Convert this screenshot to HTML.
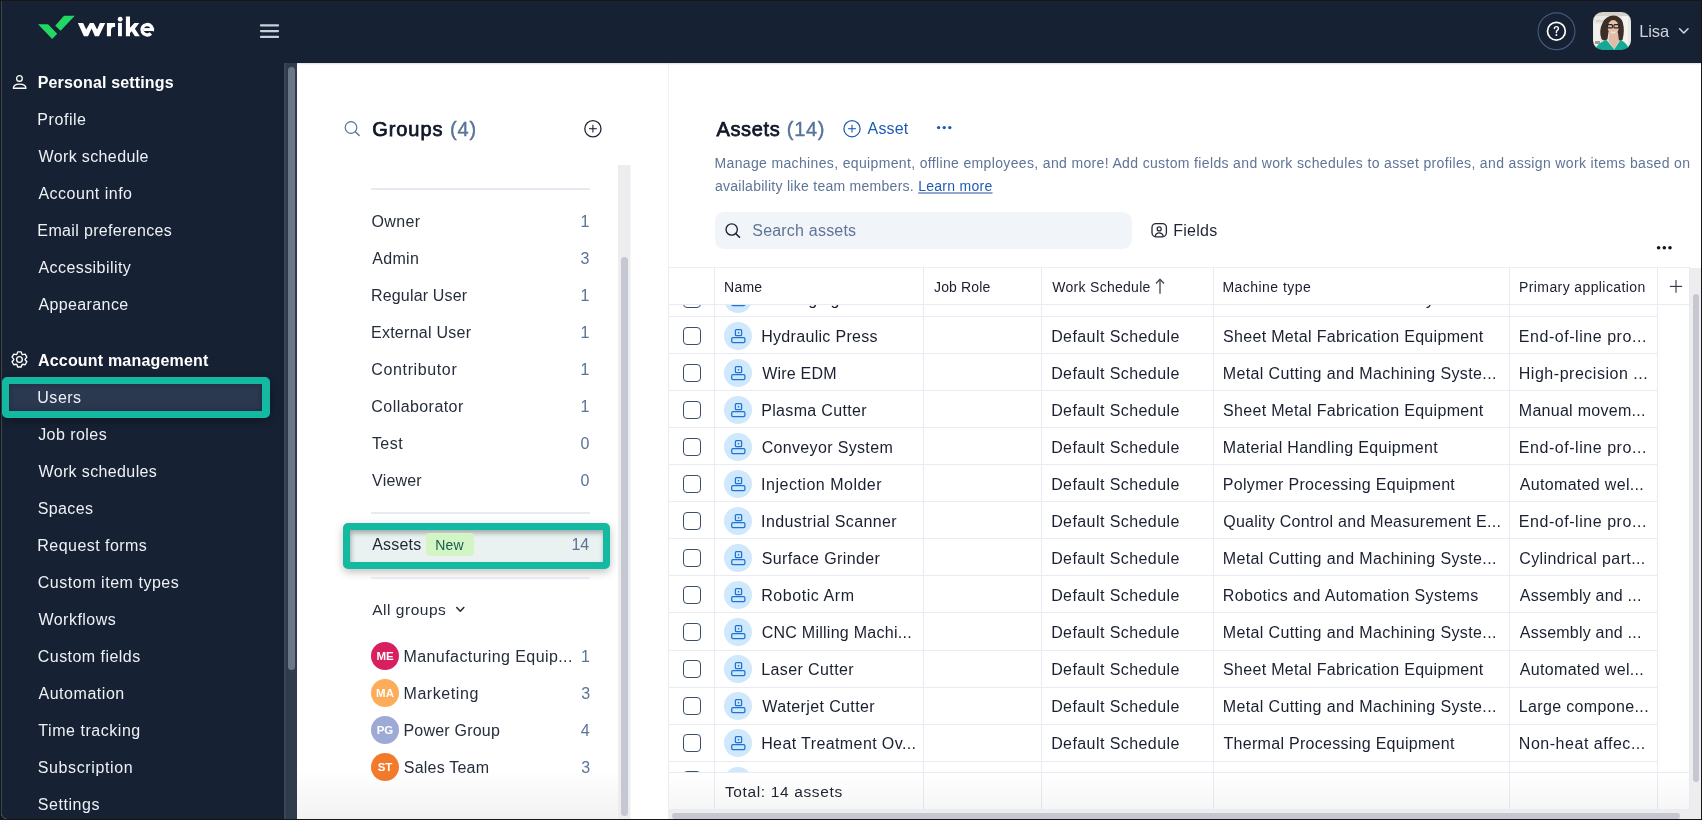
<!DOCTYPE html><html><head><meta charset="utf-8"><style>
html,body{margin:0;padding:0;width:1702px;height:820px;overflow:hidden;background:#161616}
body{position:relative;font-family:"Liberation Sans", sans-serif}
</style></head><body>
<div style="position:absolute;left:0;top:0;width:1702px;height:820px;will-change:transform">
<div style="position:absolute;left:0.00px;top:0.00px;width:1702.00px;height:820.00px;background:#161616"></div>
<div style="position:absolute;left:1.00px;top:1.00px;width:1700.00px;height:818.00px;background:#ffffff;border-radius:0 0 6px 6px"></div>
<div style="position:absolute;left:1.00px;top:1.00px;width:1700.00px;height:62.00px;background:#162133;box-shadow:inset 1px 0 0 #3a4557"></div>
<div style="position:absolute;left:1.00px;top:63.00px;width:283.00px;height:756.00px;background:#162133;border-bottom-left-radius:6px;box-shadow:inset 1px 0 0 #3a4557"></div>
<div style="position:absolute;left:284.00px;top:63.00px;width:13.00px;height:756.00px;background:#303c4d"></div>
<div style="position:absolute;left:284.00px;top:63.00px;width:2.00px;height:756.00px;background:#3a4556"></div>
<div style="position:absolute;left:288.00px;top:67.00px;width:7.00px;height:603.00px;background:#6b7686;border-radius:3.5px"></div>
<svg style="position:absolute;left:30px;top:8px;" width="130" height="40" viewBox="0 0 130 40"><polygon points="8,16.3 18,16.3 27.2,25.7 22.2,31" fill="#23d862"/><polygon points="25.2,17.7 34,7.8 44.8,7.8 30.6,22.8" fill="#23d862"/></svg>
<svg style="position:absolute;left:70px;top:10px;" width="90" height="30" viewBox="0 0 90 30"><g transform="translate(-70,-10)" fill="#ffffff"><polygon points="77.9,23 83.1,23 86.2,29.6 89.9,23 93.7,23 97.1,29.6 99.9,23 105.3,23 98.9,36.2 94.9,36.2 91.6,28.4 88,36.2 83.9,36.2"/><path d="M106.9 36.2 V22.9 H115.1 V27.1 H114 Q111 27.1 111 30.5 V36.2 Z"/><rect x="118" y="22.9" width="3.9" height="13.3"/><circle cx="120.2" cy="19.2" r="2.45"/><polygon points="125.9,16.6 130,16.6 130,27.8 134.4,22.9 139.3,22.9 134.9,28.8 139.8,36.2 134.9,36.2 131.6,31.3 130,33 130,36.2 125.9,36.2"/><path d="M152.29 31.02 A5.25 5.25 0 1 0 150.91 33.46" fill="none" stroke="#ffffff" stroke-width="3.3"/><rect x="143.5" y="28.1" width="10.6" height="2.9"/></g></svg>
<svg style="position:absolute;left:258px;top:22px;" width="24" height="18" viewBox="0 0 24 18"><g stroke="#c8d0dc" stroke-width="2.3" stroke-linecap="round"><line x1="3" y1="3.4" x2="20" y2="3.4"/><line x1="3" y1="9.1" x2="20" y2="9.1"/><line x1="3" y1="14.9" x2="20" y2="14.9"/></g></svg>
<svg style="position:absolute;left:1536px;top:11px;" width="41" height="41" viewBox="0 0 41 41"><circle cx="20.5" cy="20.2" r="18.4" fill="none" stroke="#44587a" stroke-width="1.2"/><circle cx="20.4" cy="20.2" r="8.9" fill="none" stroke="#ffffff" stroke-width="1.7"/><path d="M18.4 17.6 Q18.4 15.6 20.4 15.6 Q22.4 15.6 22.4 17.4 Q22.4 18.7 21.2 19.4 Q20.4 19.9 20.4 21.1 V21.6" fill="none" stroke="#ffffff" stroke-width="1.45" stroke-linecap="round"/><circle cx="20.4" cy="24" r="0.95" fill="#ffffff"/></svg>
<svg style="position:absolute;left:1593px;top:12px;" width="38" height="38" viewBox="0 0 38 38"><defs><clipPath id="av"><rect x="0" y="0" width="38" height="38" rx="9.5"/></clipPath><filter id="avb" x="-10%" y="-10%" width="120%" height="120%"><feGaussianBlur stdDeviation="0.55"/></filter></defs>
<g clip-path="url(#av)"><g filter="url(#avb)"><rect width="38" height="38" fill="#e8e7e3"/><rect x="0" y="0" width="38" height="4" fill="#d6d2ca"/><rect x="3" y="8" width="30" height="2.2" fill="#d9d1c4"/><rect x="29" y="4" width="6" height="30" fill="#f3f2ef"/><rect x="1" y="12" width="6" height="22" fill="#f0efec"/><rect x="2" y="29" width="5" height="3" fill="#9a9a98"/>
<path d="M8.5 27 Q5.5 19 9.5 11 Q13 3.5 20.5 3.5 Q27.5 3.8 29.8 10.5 Q32 18.5 29.5 28 Q26.5 30 24.5 27 L24.5 20 L15.5 20 L14.5 27 Q11.5 30 8.5 27 Z" fill="#3b2d27"/>
<path d="M16 21 L25 21 L26 29 L21.2 37 L15.5 29 Z" fill="#e2bba5"/>
<ellipse cx="20.2" cy="15.6" rx="5.5" ry="7.6" fill="#e5c0aa"/>
<rect x="14.6" y="12.6" width="4.9" height="3.3" rx="1" fill="none" stroke="#2a2220" stroke-width="1.1"/><rect x="20.9" y="12.6" width="4.9" height="3.3" rx="1" fill="none" stroke="#2a2220" stroke-width="1.1"/>
<path d="M18 20 Q20.3 21.3 22.6 20" fill="none" stroke="#f5f0ec" stroke-width="1"/>
<path d="M2 38 Q4 31 13.5 28 L21.2 37.5 L21.2 38 Z" fill="#14a894"/><path d="M36 38 Q34.5 31 27.5 28 L21.2 37.5 L21.2 38 Z" fill="#14a894"/></g></g></svg>
<div id="t089ccc68" style="position:absolute;left:1639.16px;top:23px;font-size:16.5px;line-height:16.5px;color:#d0d5dd;font-weight:400;white-space:nowrap;letter-spacing:-0.068px;">Lisa</div>
<svg style="position:absolute;left:1676px;top:25px;" width="16" height="12" viewBox="0 0 16 12"><polyline points="3.6,3.8 7.8,8 12,3.8" fill="none" stroke="#d0d5dd" stroke-width="1.6" stroke-linecap="round" stroke-linejoin="round"/></svg>
<svg style="position:absolute;left:11px;top:73px;" width="18" height="18" viewBox="0 0 18 18"><circle cx="8.45" cy="5.4" r="2.85" fill="none" stroke="#fff" stroke-width="1.3"/><path d="M2.35 15.25 C2.35 12.4 4.9 11.05 8.45 11.05 C12 11.05 14.95 12.4 14.95 15.25 Z" fill="none" stroke="#fff" stroke-width="1.3" stroke-linejoin="round"/></svg>
<div id="tcc30bea9" style="position:absolute;left:37.68px;top:75px;font-size:16px;line-height:16px;color:#ffffff;font-weight:700;white-space:nowrap;letter-spacing:0.162px;">Personal settings</div>
<div id="tf1e5a8e1" style="position:absolute;left:37.37px;top:112px;font-size:16px;line-height:16px;color:#eef1f5;font-weight:400;white-space:nowrap;letter-spacing:0.547px;">Profile</div>
<div id="t85e6201e" style="position:absolute;left:38.48px;top:149px;font-size:16px;line-height:16px;color:#eef1f5;font-weight:400;white-space:nowrap;letter-spacing:0.375px;">Work schedule</div>
<div id="t3ad0e400" style="position:absolute;left:38.45px;top:186px;font-size:16px;line-height:16px;color:#eef1f5;font-weight:400;white-space:nowrap;letter-spacing:0.502px;">Account info</div>
<div id="t696c27f2" style="position:absolute;left:37.37px;top:223px;font-size:16px;line-height:16px;color:#eef1f5;font-weight:400;white-space:nowrap;letter-spacing:0.346px;">Email preferences</div>
<div id="tc95e8f0c" style="position:absolute;left:38.45px;top:260px;font-size:16px;line-height:16px;color:#eef1f5;font-weight:400;white-space:nowrap;letter-spacing:0.432px;">Accessibility</div>
<div id="t3768d5e6" style="position:absolute;left:38.45px;top:297px;font-size:16px;line-height:16px;color:#eef1f5;font-weight:400;white-space:nowrap;letter-spacing:0.384px;">Appearance</div>
<svg style="position:absolute;left:9px;top:349px;" width="22" height="22" viewBox="0 0 22 22"><g fill="none" stroke="#fff" stroke-width="1.35" stroke-linejoin="round"><path d="M7.86 5.37 L8.71 2.90 L12.19 2.90 L13.04 5.37 L13.55 5.67 L16.12 5.16 L17.86 8.18 L16.14 10.15 L16.14 10.75 L17.86 12.72 L16.12 15.74 L13.55 15.23 L13.04 15.53 L12.19 18.00 L8.71 18.00 L7.86 15.53 L7.35 15.23 L4.78 15.74 L3.04 12.72 L4.76 10.75 L4.76 10.15 L3.04 8.18 L4.78 5.16 L7.35 5.67 Z"/><circle cx="10.45" cy="10.45" r="2.85"/></g></svg>
<div id="tf1911060" style="position:absolute;left:37.97px;top:353px;font-size:16px;line-height:16px;color:#ffffff;font-weight:700;white-space:nowrap;letter-spacing:0.192px;">Account management</div>
<div style="position:absolute;left:2px;top:377px;width:253px;height:27px;border:7px solid #13b9a0;border-right-width:8px;border-radius:5px;background:#2a3850;box-shadow:0 3px 8px rgba(0,0,0,0.35), inset 0 0 6px rgba(0,0,0,0.25)"></div>
<div id="t10a448cd" style="position:absolute;left:37.32px;top:390px;font-size:16px;line-height:16px;color:#eef1f5;font-weight:400;white-space:nowrap;letter-spacing:0.506px;">Users</div>
<div id="tf9e10c06" style="position:absolute;left:38.16px;top:427px;font-size:16px;line-height:16px;color:#eef1f5;font-weight:400;white-space:nowrap;letter-spacing:0.446px;">Job roles</div>
<div id="td3687b22" style="position:absolute;left:38.48px;top:464px;font-size:16px;line-height:16px;color:#eef1f5;font-weight:400;white-space:nowrap;letter-spacing:0.372px;">Work schedules</div>
<div id="td3d596b7" style="position:absolute;left:37.74px;top:501px;font-size:16px;line-height:16px;color:#eef1f5;font-weight:400;white-space:nowrap;letter-spacing:0.364px;">Spaces</div>
<div id="tce5b9b31" style="position:absolute;left:37.37px;top:538px;font-size:16px;line-height:16px;color:#eef1f5;font-weight:400;white-space:nowrap;letter-spacing:0.453px;">Request forms</div>
<div id="t3a91b459" style="position:absolute;left:37.78px;top:575px;font-size:16px;line-height:16px;color:#eef1f5;font-weight:400;white-space:nowrap;letter-spacing:0.534px;">Custom item types</div>
<div id="tcfbf8ccf" style="position:absolute;left:38.48px;top:612px;font-size:16px;line-height:16px;color:#eef1f5;font-weight:400;white-space:nowrap;letter-spacing:0.467px;">Workflows</div>
<div id="t0781cb05" style="position:absolute;left:37.78px;top:649px;font-size:16px;line-height:16px;color:#eef1f5;font-weight:400;white-space:nowrap;letter-spacing:0.457px;">Custom fields</div>
<div id="t38caa127" style="position:absolute;left:38.45px;top:686px;font-size:16px;line-height:16px;color:#eef1f5;font-weight:400;white-space:nowrap;letter-spacing:0.542px;">Automation</div>
<div id="tc968eeec" style="position:absolute;left:38.37px;top:723px;font-size:16px;line-height:16px;color:#eef1f5;font-weight:400;white-space:nowrap;letter-spacing:0.536px;">Time tracking</div>
<div id="te81e3feb" style="position:absolute;left:37.74px;top:760px;font-size:16px;line-height:16px;color:#eef1f5;font-weight:400;white-space:nowrap;letter-spacing:0.626px;">Subscription</div>
<div id="t53f609fd" style="position:absolute;left:37.74px;top:797px;font-size:16px;line-height:16px;color:#eef1f5;font-weight:400;white-space:nowrap;letter-spacing:0.575px;">Settings</div>
<svg style="position:absolute;left:342px;top:118px;" width="20" height="20" viewBox="0 0 20 20"><circle cx="9" cy="9.5" r="5.8" fill="none" stroke="#5a7398" stroke-width="1.2"/><line x1="13.4" y1="13.8" x2="17.2" y2="17.6" stroke="#5a7398" stroke-width="1.4" stroke-linecap="round"/></svg>
<div id="tecbcf867" style="position:absolute;left:372.16px;top:119px;font-size:20px;line-height:20px;color:#0f1626;font-weight:400;white-space:nowrap;letter-spacing:0.941px;-webkit-text-stroke:0.75px #0f1626;">Groups <span style="color:#5a7398;-webkit-text-stroke:0.4px #5a7398">(4)</span></div>
<svg style="position:absolute;left:582px;top:118px;" width="22" height="22" viewBox="0 0 22 22"><circle cx="10.9" cy="10.7" r="8.1" fill="none" stroke="#1f2533" stroke-width="1.3"/><line x1="10.9" y1="6.8" x2="10.9" y2="14.6" stroke="#1f2533" stroke-width="1.1"/><line x1="7" y1="10.7" x2="14.8" y2="10.7" stroke="#1f2533" stroke-width="1.1"/></svg>
<div style="position:absolute;left:371.00px;top:188.00px;width:219.00px;height:2.00px;background:#e6ebf2"></div>
<div id="t1ca4002c" style="position:absolute;left:371.44px;top:214px;font-size:16px;line-height:16px;color:#262d3b;font-weight:400;white-space:nowrap;letter-spacing:0.374px;">Owner</div>
<div id="t47a4f1d7" style="position:absolute;left:580.54px;top:214px;font-size:16px;line-height:16px;color:#5a7398;font-weight:400;white-space:nowrap;letter-spacing:0.000px;">1</div>
<div id="td921d58f" style="position:absolute;left:372.13px;top:251px;font-size:16px;line-height:16px;color:#262d3b;font-weight:400;white-space:nowrap;letter-spacing:0.356px;">Admin</div>
<div id="td225ea31" style="position:absolute;left:580.60px;top:251px;font-size:16px;line-height:16px;color:#5a7398;font-weight:400;white-space:nowrap;letter-spacing:0.000px;">3</div>
<div id="t22145ef4" style="position:absolute;left:370.96px;top:288px;font-size:16px;line-height:16px;color:#262d3b;font-weight:400;white-space:nowrap;letter-spacing:0.179px;">Regular User</div>
<div id="t484b5d3d" style="position:absolute;left:580.54px;top:288px;font-size:16px;line-height:16px;color:#5a7398;font-weight:400;white-space:nowrap;letter-spacing:0.000px;">1</div>
<div id="t48e4a2c5" style="position:absolute;left:370.96px;top:325px;font-size:16px;line-height:16px;color:#262d3b;font-weight:400;white-space:nowrap;letter-spacing:0.268px;">External User</div>
<div id="t0b0fef1c" style="position:absolute;left:580.54px;top:325px;font-size:16px;line-height:16px;color:#5a7398;font-weight:400;white-space:nowrap;letter-spacing:0.000px;">1</div>
<div id="t118f72aa" style="position:absolute;left:371.35px;top:362px;font-size:16px;line-height:16px;color:#262d3b;font-weight:400;white-space:nowrap;letter-spacing:0.623px;">Contributor</div>
<div id="t246556c1" style="position:absolute;left:580.54px;top:362px;font-size:16px;line-height:16px;color:#5a7398;font-weight:400;white-space:nowrap;letter-spacing:0.000px;">1</div>
<div id="t109a37b2" style="position:absolute;left:371.35px;top:399px;font-size:16px;line-height:16px;color:#262d3b;font-weight:400;white-space:nowrap;letter-spacing:0.431px;">Collaborator</div>
<div id="td34b2a5d" style="position:absolute;left:580.54px;top:399px;font-size:16px;line-height:16px;color:#5a7398;font-weight:400;white-space:nowrap;letter-spacing:0.000px;">1</div>
<div id="tfec84aad" style="position:absolute;left:371.90px;top:436px;font-size:16px;line-height:16px;color:#262d3b;font-weight:400;white-space:nowrap;letter-spacing:0.455px;">Test</div>
<div id="t334d44fc" style="position:absolute;left:580.46px;top:436px;font-size:16px;line-height:16px;color:#5a7398;font-weight:400;white-space:nowrap;letter-spacing:0.000px;">0</div>
<div id="tcf6612cc" style="position:absolute;left:372.06px;top:473px;font-size:16px;line-height:16px;color:#262d3b;font-weight:400;white-space:nowrap;letter-spacing:0.207px;">Viewer</div>
<div id="tbb4621a0" style="position:absolute;left:580.46px;top:473px;font-size:16px;line-height:16px;color:#5a7398;font-weight:400;white-space:nowrap;letter-spacing:0.000px;">0</div>
<div style="position:absolute;left:371.00px;top:512.00px;width:219.00px;height:2.00px;background:#e6ebf2"></div>
<div style="position:absolute;left:342.6px;top:523px;width:253.4px;height:32px;border:7px solid #13b9a0;border-radius:5px;background:#e9f2f1;box-shadow:0 3px 8px rgba(0,0,0,0.25), inset 1px 3px 5px rgba(0,0,0,0.3)"></div>
<div id="t63cd0609" style="position:absolute;left:372.24px;top:537px;font-size:16px;line-height:16px;color:#1f2533;font-weight:400;white-space:nowrap;letter-spacing:0.177px;">Assets</div>
<div style="position:absolute;left:425.70px;top:533.20px;width:48.30px;height:22.90px;background:#d3f5c6;border-radius:4px"></div>
<div id="tc17a2e8d" style="position:absolute;left:435.14px;top:538px;font-size:14px;line-height:14px;color:#1d5a50;font-weight:400;white-space:nowrap;letter-spacing:0.178px;">New</div>
<div id="t0e2c772d" style="position:absolute;left:571.42px;top:537px;font-size:16px;line-height:16px;color:#5a7398;font-weight:400;white-space:nowrap;letter-spacing:0.000px;">14</div>
<div style="position:absolute;left:371.00px;top:577.00px;width:219.00px;height:2.00px;background:#e6ebf2"></div>
<div id="t354a58ce" style="position:absolute;left:372.22px;top:602px;font-size:15.5px;line-height:15.5px;color:#262d3b;font-weight:400;white-space:nowrap;letter-spacing:0.521px;">All groups</div>
<svg style="position:absolute;left:453px;top:603px;" width="14" height="12" viewBox="0 0 14 12"><polyline points="3.8,4.5 7.3,8.2 10.8,4.5" fill="none" stroke="#262d3b" stroke-width="1.6" stroke-linecap="round" stroke-linejoin="round"/></svg>
<div style="position:absolute;left:371.00px;top:642.00px;width:28.00px;height:28.00px;background:#d81f5f;border-radius:50%"></div>
<div style="position:absolute;left:371px;top:642px;width:28px;height:28px;line-height:28px;text-align:center;font-size:11.5px;font-weight:700;color:#fff">ME</div>
<div id="t9c94eb5a" style="position:absolute;left:403.49px;top:649px;font-size:16px;line-height:16px;color:#262d3b;font-weight:400;white-space:nowrap;letter-spacing:0.421px;">Manufacturing Equip...</div>
<div id="tb49bcb27" style="position:absolute;left:581.03px;top:649px;font-size:16px;line-height:16px;color:#5a7398;font-weight:400;white-space:nowrap;letter-spacing:0.000px;">1</div>
<div style="position:absolute;left:371.00px;top:679.00px;width:28.00px;height:28.00px;background:#fdac5a;border-radius:50%"></div>
<div style="position:absolute;left:371px;top:679px;width:28px;height:28px;line-height:28px;text-align:center;font-size:11.5px;font-weight:700;color:#fff">MA</div>
<div id="t2b19dd33" style="position:absolute;left:403.49px;top:686px;font-size:16px;line-height:16px;color:#262d3b;font-weight:400;white-space:nowrap;letter-spacing:0.569px;">Marketing</div>
<div id="t029ac3f8" style="position:absolute;left:581.26px;top:686px;font-size:16px;line-height:16px;color:#5a7398;font-weight:400;white-space:nowrap;letter-spacing:0.000px;">3</div>
<div style="position:absolute;left:371.00px;top:716.00px;width:28.00px;height:28.00px;background:#9eaad6;border-radius:50%"></div>
<div style="position:absolute;left:371px;top:716px;width:28px;height:28px;line-height:28px;text-align:center;font-size:11.5px;font-weight:700;color:#fff">PG</div>
<div id="td458ef30" style="position:absolute;left:403.49px;top:723px;font-size:16px;line-height:16px;color:#262d3b;font-weight:400;white-space:nowrap;letter-spacing:0.211px;">Power Group</div>
<div id="t2cd7de99" style="position:absolute;left:580.76px;top:723px;font-size:16px;line-height:16px;color:#5a7398;font-weight:400;white-space:nowrap;letter-spacing:0.000px;">4</div>
<div style="position:absolute;left:371.00px;top:753.00px;width:28.00px;height:28.00px;background:#f37a2b;border-radius:50%"></div>
<div style="position:absolute;left:371px;top:753px;width:28px;height:28px;line-height:28px;text-align:center;font-size:11.5px;font-weight:700;color:#fff">ST</div>
<div id="t9b32bf72" style="position:absolute;left:403.85px;top:760px;font-size:16px;line-height:16px;color:#262d3b;font-weight:400;white-space:nowrap;letter-spacing:0.202px;">Sales Team</div>
<div id="t75cc4b61" style="position:absolute;left:581.27px;top:760px;font-size:16px;line-height:16px;color:#5a7398;font-weight:400;white-space:nowrap;letter-spacing:0.000px;">3</div>
<div style="position:absolute;left:618.00px;top:165.00px;width:13.00px;height:654.00px;background:#ededf0"></div>
<div style="position:absolute;left:629.50px;top:165.00px;width:1.50px;height:654.00px;background:#f6f6f8"></div>
<div style="position:absolute;left:621.20px;top:256.50px;width:6.80px;height:559.50px;background:#c5c8d0;border-radius:3.5px"></div>
<div style="position:absolute;left:297.00px;top:770.00px;width:321.00px;height:49.00px;background:linear-gradient(rgba(0,0,0,0),rgba(0,0,0,0.05))"></div>
<div style="position:absolute;left:668.00px;top:63.00px;width:1.00px;height:756.00px;background:#f0f2f6"></div>
<div style="position:absolute;left:297.00px;top:63.00px;width:1404.00px;height:2.00px;background:linear-gradient(rgba(0,0,0,0.13),rgba(0,0,0,0))"></div>
<div id="t4f0af54b" style="position:absolute;left:716.39px;top:119px;font-size:20px;line-height:20px;color:#0f1626;font-weight:400;white-space:nowrap;letter-spacing:0.690px;-webkit-text-stroke:0.75px #0f1626;">Assets <span style="color:#5a7398;-webkit-text-stroke:0.4px #5a7398">(14)</span></div>
<svg style="position:absolute;left:842px;top:118px;" width="22" height="22" viewBox="0 0 22 22"><circle cx="10" cy="10.7" r="8.1" fill="none" stroke="#1f5bb5" stroke-width="1.25"/><line x1="10" y1="6.8" x2="10" y2="14.6" stroke="#1f5bb5" stroke-width="1.1"/><line x1="6.1" y1="10.7" x2="13.9" y2="10.7" stroke="#1f5bb5" stroke-width="1.1"/></svg>
<div id="tf9fa497d" style="position:absolute;left:867.60px;top:121px;font-size:16px;line-height:16px;color:#1f5bb5;font-weight:400;white-space:nowrap;letter-spacing:0.166px;">Asset</div>
<svg style="position:absolute;left:934px;top:123px;" width="22" height="10" viewBox="0 0 22 10"><circle cx="4.6" cy="4.6" r="1.7" fill="#1f5bb5"/><circle cx="10.2" cy="4.6" r="1.7" fill="#1f5bb5"/><circle cx="15.8" cy="4.6" r="1.7" fill="#1f5bb5"/></svg>
<div id="tb2039af8" style="position:absolute;left:714.52px;top:156px;font-size:14px;line-height:14px;color:#5f7497;font-weight:400;white-space:nowrap;letter-spacing:0.350px;">Manage machines, equipment, offline employees, and more! Add custom fields and work schedules to asset profiles, and assign work items based on</div>
<div id="te2ed443b" style="position:absolute;left:714.95px;top:179px;font-size:14px;line-height:14px;color:#5f7497;font-weight:400;white-space:nowrap;letter-spacing:0.273px;">availability like team members. <span style="color:#1f5bb5;text-decoration:underline;text-decoration-color:#94a6cf;text-decoration-thickness:1.5px;text-underline-offset:1px">Learn more</span></div>
<div style="position:absolute;left:715.00px;top:211.50px;width:416.70px;height:37.00px;background:#f1f4f9;border-radius:9px"></div>
<svg style="position:absolute;left:722px;top:220px;" width="22" height="22" viewBox="0 0 22 22"><circle cx="9.7" cy="9.5" r="5.65" fill="none" stroke="#1a2233" stroke-width="1.35"/><line x1="13.7" y1="13.5" x2="17.5" y2="17.2" stroke="#1a2233" stroke-width="1.6" stroke-linecap="round"/></svg>
<div id="td4f103bd" style="position:absolute;left:752.28px;top:223px;font-size:16px;line-height:16px;color:#5f7497;font-weight:400;white-space:nowrap;letter-spacing:0.203px;">Search assets</div>
<svg style="position:absolute;left:1149px;top:221px;" width="20" height="18" viewBox="0 0 20 18"><rect x="3" y="2.6" width="14.4" height="13.2" rx="4" fill="none" stroke="#1f2533" stroke-width="1.3"/><circle cx="10.2" cy="7.9" r="2" fill="none" stroke="#1f2533" stroke-width="1.25"/><path d="M6 15.6 Q7 11.9 10.2 11.9 Q13.4 11.9 14.4 15.6" fill="none" stroke="#1f2533" stroke-width="1.3"/></svg>
<div id="t449881b0" style="position:absolute;left:1173.20px;top:223px;font-size:16px;line-height:16px;color:#1f2533;font-weight:400;white-space:nowrap;letter-spacing:0.274px;">Fields</div>
<svg style="position:absolute;left:1654px;top:243px;" width="22" height="10" viewBox="0 0 22 10"><circle cx="4.6" cy="4.8" r="1.8" fill="#0f1626"/><circle cx="10.3" cy="4.8" r="1.8" fill="#0f1626"/><circle cx="16" cy="4.8" r="1.8" fill="#0f1626"/></svg>
<div style="position:absolute;left:683.00px;top:290.00px;width:18.00px;height:18.00px;box-sizing:border-box;border:1.5px solid #3b4f6b;border-radius:4px;background:#fff"></div>
<div style="position:absolute;left:724.00px;top:284.74px;width:28.00px;height:28.00px;background:#cfe8fc;border-radius:50%"></div>
<svg style="position:absolute;left:724px;top:284.74px" width="28" height="28" viewBox="0 0 28 28"><rect x="11.4" y="7.6" width="6.2" height="6.1" rx="1" fill="none" stroke="#1b74d6" stroke-width="1.25"/><rect x="13.8" y="10" width="1.5" height="1.5" rx="0.5" fill="#1b74d6"/><rect x="7.7" y="15.6" width="13.2" height="4.9" rx="1.3" fill="none" stroke="#1b74d6" stroke-width="1.25"/></svg>
<div id="t5bdaa89f" style="position:absolute;left:762.30px;top:292px;font-size:16px;line-height:16px;color:#1a2030;font-weight:400;white-space:nowrap;letter-spacing:0.300px;">Packaging Machine</div>
<div id="t2c2629b5" style="position:absolute;left:1052.20px;top:292px;font-size:16px;line-height:16px;color:#1a2030;font-weight:400;white-space:nowrap;letter-spacing:0.317px;">Default Schedule</div>
<div id="t6121fd71" style="position:absolute;left:1223.80px;top:292px;font-size:16px;line-height:16px;color:#1a2030;font-weight:400;white-space:nowrap;letter-spacing:0.300px;">Material Removal Machinery</div>
<div id="tfe5e5f64" style="position:absolute;left:1519.90px;top:292px;font-size:16px;line-height:16px;color:#1a2030;font-weight:400;white-space:nowrap;letter-spacing:0.300px;">Automated wel...</div>
<div style="position:absolute;left:668.00px;top:316.00px;width:989.00px;height:1.00px;background:#e8ebf4"></div>
<div style="position:absolute;left:683.00px;top:327.00px;width:18.00px;height:18.00px;box-sizing:border-box;border:1.5px solid #3b4f6b;border-radius:4px;background:#fff"></div>
<div style="position:absolute;left:724.00px;top:321.80px;width:28.00px;height:28.00px;background:#cfe8fc;border-radius:50%"></div>
<svg style="position:absolute;left:724px;top:321.80px" width="28" height="28" viewBox="0 0 28 28"><rect x="11.4" y="7.6" width="6.2" height="6.1" rx="1" fill="none" stroke="#1b74d6" stroke-width="1.25"/><rect x="13.8" y="10" width="1.5" height="1.5" rx="0.5" fill="#1b74d6"/><rect x="7.7" y="15.6" width="13.2" height="4.9" rx="1.3" fill="none" stroke="#1b74d6" stroke-width="1.25"/></svg>
<div id="t6dde78d8" style="position:absolute;left:761.17px;top:329px;font-size:16px;line-height:16px;color:#1a2030;font-weight:400;white-space:nowrap;letter-spacing:0.316px;">Hydraulic Press</div>
<div id="t7822a633" style="position:absolute;left:1051.14px;top:329px;font-size:16px;line-height:16px;color:#1a2030;font-weight:400;white-space:nowrap;letter-spacing:0.425px;">Default Schedule</div>
<div id="t796f78c5" style="position:absolute;left:1223.06px;top:329px;font-size:16px;line-height:16px;color:#1a2030;font-weight:400;white-space:nowrap;letter-spacing:0.320px;">Sheet Metal Fabrication Equipment</div>
<div id="tff2ecd33" style="position:absolute;left:1518.81px;top:329px;font-size:16px;line-height:16px;color:#1a2030;font-weight:400;white-space:nowrap;letter-spacing:0.546px;">End-of-line pro...</div>
<div style="position:absolute;left:668.00px;top:353.00px;width:989.00px;height:1.00px;background:#e8ebf4"></div>
<div style="position:absolute;left:683.00px;top:364.00px;width:18.00px;height:18.00px;box-sizing:border-box;border:1.5px solid #3b4f6b;border-radius:4px;background:#fff"></div>
<div style="position:absolute;left:724.00px;top:358.86px;width:28.00px;height:28.00px;background:#cfe8fc;border-radius:50%"></div>
<svg style="position:absolute;left:724px;top:358.86px" width="28" height="28" viewBox="0 0 28 28"><rect x="11.4" y="7.6" width="6.2" height="6.1" rx="1" fill="none" stroke="#1b74d6" stroke-width="1.25"/><rect x="13.8" y="10" width="1.5" height="1.5" rx="0.5" fill="#1b74d6"/><rect x="7.7" y="15.6" width="13.2" height="4.9" rx="1.3" fill="none" stroke="#1b74d6" stroke-width="1.25"/></svg>
<div id="t2cc42e96" style="position:absolute;left:762.29px;top:366px;font-size:16px;line-height:16px;color:#1a2030;font-weight:400;white-space:nowrap;letter-spacing:0.193px;">Wire EDM</div>
<div id="t91952534" style="position:absolute;left:1051.14px;top:366px;font-size:16px;line-height:16px;color:#1a2030;font-weight:400;white-space:nowrap;letter-spacing:0.425px;">Default Schedule</div>
<div id="t404a1391" style="position:absolute;left:1222.70px;top:366px;font-size:16px;line-height:16px;color:#1a2030;font-weight:400;white-space:nowrap;letter-spacing:0.375px;">Metal Cutting and Machining Syste...</div>
<div id="tf52ee1c1" style="position:absolute;left:1518.81px;top:366px;font-size:16px;line-height:16px;color:#1a2030;font-weight:400;white-space:nowrap;letter-spacing:0.520px;">High-precision ...</div>
<div style="position:absolute;left:668.00px;top:390.00px;width:989.00px;height:1.00px;background:#e8ebf4"></div>
<div style="position:absolute;left:683.00px;top:401.00px;width:18.00px;height:18.00px;box-sizing:border-box;border:1.5px solid #3b4f6b;border-radius:4px;background:#fff"></div>
<div style="position:absolute;left:724.00px;top:395.92px;width:28.00px;height:28.00px;background:#cfe8fc;border-radius:50%"></div>
<svg style="position:absolute;left:724px;top:395.92px" width="28" height="28" viewBox="0 0 28 28"><rect x="11.4" y="7.6" width="6.2" height="6.1" rx="1" fill="none" stroke="#1b74d6" stroke-width="1.25"/><rect x="13.8" y="10" width="1.5" height="1.5" rx="0.5" fill="#1b74d6"/><rect x="7.7" y="15.6" width="13.2" height="4.9" rx="1.3" fill="none" stroke="#1b74d6" stroke-width="1.25"/></svg>
<div id="t758a5887" style="position:absolute;left:761.17px;top:403px;font-size:16px;line-height:16px;color:#1a2030;font-weight:400;white-space:nowrap;letter-spacing:0.343px;">Plasma Cutter</div>
<div id="tbc361cf9" style="position:absolute;left:1051.14px;top:403px;font-size:16px;line-height:16px;color:#1a2030;font-weight:400;white-space:nowrap;letter-spacing:0.425px;">Default Schedule</div>
<div id="t87c3a866" style="position:absolute;left:1223.06px;top:403px;font-size:16px;line-height:16px;color:#1a2030;font-weight:400;white-space:nowrap;letter-spacing:0.320px;">Sheet Metal Fabrication Equipment</div>
<div id="tdc07280b" style="position:absolute;left:1518.81px;top:403px;font-size:16px;line-height:16px;color:#1a2030;font-weight:400;white-space:nowrap;letter-spacing:0.278px;">Manual movem...</div>
<div style="position:absolute;left:668.00px;top:427.00px;width:989.00px;height:1.00px;background:#e8ebf4"></div>
<div style="position:absolute;left:683.00px;top:438.00px;width:18.00px;height:18.00px;box-sizing:border-box;border:1.5px solid #3b4f6b;border-radius:4px;background:#fff"></div>
<div style="position:absolute;left:724.00px;top:432.98px;width:28.00px;height:28.00px;background:#cfe8fc;border-radius:50%"></div>
<svg style="position:absolute;left:724px;top:432.98px" width="28" height="28" viewBox="0 0 28 28"><rect x="11.4" y="7.6" width="6.2" height="6.1" rx="1" fill="none" stroke="#1b74d6" stroke-width="1.25"/><rect x="13.8" y="10" width="1.5" height="1.5" rx="0.5" fill="#1b74d6"/><rect x="7.7" y="15.6" width="13.2" height="4.9" rx="1.3" fill="none" stroke="#1b74d6" stroke-width="1.25"/></svg>
<div id="t0212746f" style="position:absolute;left:761.65px;top:440px;font-size:16px;line-height:16px;color:#1a2030;font-weight:400;white-space:nowrap;letter-spacing:0.343px;">Conveyor System</div>
<div id="t47da4752" style="position:absolute;left:1051.14px;top:440px;font-size:16px;line-height:16px;color:#1a2030;font-weight:400;white-space:nowrap;letter-spacing:0.425px;">Default Schedule</div>
<div id="ta9df5022" style="position:absolute;left:1222.70px;top:440px;font-size:16px;line-height:16px;color:#1a2030;font-weight:400;white-space:nowrap;letter-spacing:0.370px;">Material Handling Equipment</div>
<div id="t069104a1" style="position:absolute;left:1518.81px;top:440px;font-size:16px;line-height:16px;color:#1a2030;font-weight:400;white-space:nowrap;letter-spacing:0.546px;">End-of-line pro...</div>
<div style="position:absolute;left:668.00px;top:464.00px;width:989.00px;height:1.00px;background:#e8ebf4"></div>
<div style="position:absolute;left:683.00px;top:475.00px;width:18.00px;height:18.00px;box-sizing:border-box;border:1.5px solid #3b4f6b;border-radius:4px;background:#fff"></div>
<div style="position:absolute;left:724.00px;top:470.04px;width:28.00px;height:28.00px;background:#cfe8fc;border-radius:50%"></div>
<svg style="position:absolute;left:724px;top:470.04px" width="28" height="28" viewBox="0 0 28 28"><rect x="11.4" y="7.6" width="6.2" height="6.1" rx="1" fill="none" stroke="#1b74d6" stroke-width="1.25"/><rect x="13.8" y="10" width="1.5" height="1.5" rx="0.5" fill="#1b74d6"/><rect x="7.7" y="15.6" width="13.2" height="4.9" rx="1.3" fill="none" stroke="#1b74d6" stroke-width="1.25"/></svg>
<div id="t58a813f5" style="position:absolute;left:761.07px;top:477px;font-size:16px;line-height:16px;color:#1a2030;font-weight:400;white-space:nowrap;letter-spacing:0.505px;">Injection Molder</div>
<div id="t7565dc4c" style="position:absolute;left:1051.14px;top:477px;font-size:16px;line-height:16px;color:#1a2030;font-weight:400;white-space:nowrap;letter-spacing:0.425px;">Default Schedule</div>
<div id="t8b94b9a0" style="position:absolute;left:1222.70px;top:477px;font-size:16px;line-height:16px;color:#1a2030;font-weight:400;white-space:nowrap;letter-spacing:0.330px;">Polymer Processing Equipment</div>
<div id="t9b888ed2" style="position:absolute;left:1519.85px;top:477px;font-size:16px;line-height:16px;color:#1a2030;font-weight:400;white-space:nowrap;letter-spacing:0.315px;">Automated wel...</div>
<div style="position:absolute;left:668.00px;top:501.00px;width:989.00px;height:1.00px;background:#e8ebf4"></div>
<div style="position:absolute;left:683.00px;top:512.00px;width:18.00px;height:18.00px;box-sizing:border-box;border:1.5px solid #3b4f6b;border-radius:4px;background:#fff"></div>
<div style="position:absolute;left:724.00px;top:507.10px;width:28.00px;height:28.00px;background:#cfe8fc;border-radius:50%"></div>
<svg style="position:absolute;left:724px;top:507.10px" width="28" height="28" viewBox="0 0 28 28"><rect x="11.4" y="7.6" width="6.2" height="6.1" rx="1" fill="none" stroke="#1b74d6" stroke-width="1.25"/><rect x="13.8" y="10" width="1.5" height="1.5" rx="0.5" fill="#1b74d6"/><rect x="7.7" y="15.6" width="13.2" height="4.9" rx="1.3" fill="none" stroke="#1b74d6" stroke-width="1.25"/></svg>
<div id="tcb971b9f" style="position:absolute;left:761.07px;top:514px;font-size:16px;line-height:16px;color:#1a2030;font-weight:400;white-space:nowrap;letter-spacing:0.388px;">Industrial Scanner</div>
<div id="tdb5f1a25" style="position:absolute;left:1051.14px;top:514px;font-size:16px;line-height:16px;color:#1a2030;font-weight:400;white-space:nowrap;letter-spacing:0.425px;">Default Schedule</div>
<div id="t6cba134c" style="position:absolute;left:1223.16px;top:514px;font-size:16px;line-height:16px;color:#1a2030;font-weight:400;white-space:nowrap;letter-spacing:0.288px;">Quality Control and Measurement E...</div>
<div id="ta3de2b31" style="position:absolute;left:1518.81px;top:514px;font-size:16px;line-height:16px;color:#1a2030;font-weight:400;white-space:nowrap;letter-spacing:0.546px;">End-of-line pro...</div>
<div style="position:absolute;left:668.00px;top:538.00px;width:989.00px;height:1.00px;background:#e8ebf4"></div>
<div style="position:absolute;left:683.00px;top:549.00px;width:18.00px;height:18.00px;box-sizing:border-box;border:1.5px solid #3b4f6b;border-radius:4px;background:#fff"></div>
<div style="position:absolute;left:724.00px;top:544.16px;width:28.00px;height:28.00px;background:#cfe8fc;border-radius:50%"></div>
<svg style="position:absolute;left:724px;top:544.16px" width="28" height="28" viewBox="0 0 28 28"><rect x="11.4" y="7.6" width="6.2" height="6.1" rx="1" fill="none" stroke="#1b74d6" stroke-width="1.25"/><rect x="13.8" y="10" width="1.5" height="1.5" rx="0.5" fill="#1b74d6"/><rect x="7.7" y="15.6" width="13.2" height="4.9" rx="1.3" fill="none" stroke="#1b74d6" stroke-width="1.25"/></svg>
<div id="t3f17ce6f" style="position:absolute;left:761.68px;top:551px;font-size:16px;line-height:16px;color:#1a2030;font-weight:400;white-space:nowrap;letter-spacing:0.368px;">Surface Grinder</div>
<div id="t9a8bfa34" style="position:absolute;left:1051.14px;top:551px;font-size:16px;line-height:16px;color:#1a2030;font-weight:400;white-space:nowrap;letter-spacing:0.425px;">Default Schedule</div>
<div id="t47c92fa1" style="position:absolute;left:1222.70px;top:551px;font-size:16px;line-height:16px;color:#1a2030;font-weight:400;white-space:nowrap;letter-spacing:0.375px;">Metal Cutting and Machining Syste...</div>
<div id="tf3add8b0" style="position:absolute;left:1519.22px;top:551px;font-size:16px;line-height:16px;color:#1a2030;font-weight:400;white-space:nowrap;letter-spacing:0.385px;">Cylindrical part...</div>
<div style="position:absolute;left:668.00px;top:575.00px;width:989.00px;height:1.00px;background:#e8ebf4"></div>
<div style="position:absolute;left:683.00px;top:586.00px;width:18.00px;height:18.00px;box-sizing:border-box;border:1.5px solid #3b4f6b;border-radius:4px;background:#fff"></div>
<div style="position:absolute;left:724.00px;top:581.22px;width:28.00px;height:28.00px;background:#cfe8fc;border-radius:50%"></div>
<svg style="position:absolute;left:724px;top:581.22px" width="28" height="28" viewBox="0 0 28 28"><rect x="11.4" y="7.6" width="6.2" height="6.1" rx="1" fill="none" stroke="#1b74d6" stroke-width="1.25"/><rect x="13.8" y="10" width="1.5" height="1.5" rx="0.5" fill="#1b74d6"/><rect x="7.7" y="15.6" width="13.2" height="4.9" rx="1.3" fill="none" stroke="#1b74d6" stroke-width="1.25"/></svg>
<div id="t1fc33f7e" style="position:absolute;left:761.17px;top:588px;font-size:16px;line-height:16px;color:#1a2030;font-weight:400;white-space:nowrap;letter-spacing:0.576px;">Robotic Arm</div>
<div id="t0471dbc4" style="position:absolute;left:1051.14px;top:588px;font-size:16px;line-height:16px;color:#1a2030;font-weight:400;white-space:nowrap;letter-spacing:0.425px;">Default Schedule</div>
<div id="t38e63b34" style="position:absolute;left:1222.70px;top:588px;font-size:16px;line-height:16px;color:#1a2030;font-weight:400;white-space:nowrap;letter-spacing:0.397px;">Robotics and Automation Systems</div>
<div id="tac103eba" style="position:absolute;left:1519.85px;top:588px;font-size:16px;line-height:16px;color:#1a2030;font-weight:400;white-space:nowrap;letter-spacing:0.214px;">Assembly and ...</div>
<div style="position:absolute;left:668.00px;top:612.00px;width:989.00px;height:1.00px;background:#e8ebf4"></div>
<div style="position:absolute;left:683.00px;top:623.00px;width:18.00px;height:18.00px;box-sizing:border-box;border:1.5px solid #3b4f6b;border-radius:4px;background:#fff"></div>
<div style="position:absolute;left:724.00px;top:618.28px;width:28.00px;height:28.00px;background:#cfe8fc;border-radius:50%"></div>
<svg style="position:absolute;left:724px;top:618.28px" width="28" height="28" viewBox="0 0 28 28"><rect x="11.4" y="7.6" width="6.2" height="6.1" rx="1" fill="none" stroke="#1b74d6" stroke-width="1.25"/><rect x="13.8" y="10" width="1.5" height="1.5" rx="0.5" fill="#1b74d6"/><rect x="7.7" y="15.6" width="13.2" height="4.9" rx="1.3" fill="none" stroke="#1b74d6" stroke-width="1.25"/></svg>
<div id="t6956567e" style="position:absolute;left:761.65px;top:625px;font-size:16px;line-height:16px;color:#1a2030;font-weight:400;white-space:nowrap;letter-spacing:0.265px;">CNC Milling Machi...</div>
<div id="tef1d95ea" style="position:absolute;left:1051.14px;top:625px;font-size:16px;line-height:16px;color:#1a2030;font-weight:400;white-space:nowrap;letter-spacing:0.425px;">Default Schedule</div>
<div id="tff050d82" style="position:absolute;left:1222.70px;top:625px;font-size:16px;line-height:16px;color:#1a2030;font-weight:400;white-space:nowrap;letter-spacing:0.375px;">Metal Cutting and Machining Syste...</div>
<div id="t0c998b5f" style="position:absolute;left:1519.85px;top:625px;font-size:16px;line-height:16px;color:#1a2030;font-weight:400;white-space:nowrap;letter-spacing:0.214px;">Assembly and ...</div>
<div style="position:absolute;left:668.00px;top:650.00px;width:989.00px;height:1.00px;background:#e8ebf4"></div>
<div style="position:absolute;left:683.00px;top:660.00px;width:18.00px;height:18.00px;box-sizing:border-box;border:1.5px solid #3b4f6b;border-radius:4px;background:#fff"></div>
<div style="position:absolute;left:724.00px;top:655.34px;width:28.00px;height:28.00px;background:#cfe8fc;border-radius:50%"></div>
<svg style="position:absolute;left:724px;top:655.34px" width="28" height="28" viewBox="0 0 28 28"><rect x="11.4" y="7.6" width="6.2" height="6.1" rx="1" fill="none" stroke="#1b74d6" stroke-width="1.25"/><rect x="13.8" y="10" width="1.5" height="1.5" rx="0.5" fill="#1b74d6"/><rect x="7.7" y="15.6" width="13.2" height="4.9" rx="1.3" fill="none" stroke="#1b74d6" stroke-width="1.25"/></svg>
<div id="t1a46a8e3" style="position:absolute;left:761.17px;top:662px;font-size:16px;line-height:16px;color:#1a2030;font-weight:400;white-space:nowrap;letter-spacing:0.407px;">Laser Cutter</div>
<div id="t8fc75bd7" style="position:absolute;left:1051.14px;top:662px;font-size:16px;line-height:16px;color:#1a2030;font-weight:400;white-space:nowrap;letter-spacing:0.425px;">Default Schedule</div>
<div id="t25311665" style="position:absolute;left:1223.06px;top:662px;font-size:16px;line-height:16px;color:#1a2030;font-weight:400;white-space:nowrap;letter-spacing:0.320px;">Sheet Metal Fabrication Equipment</div>
<div id="te87b3529" style="position:absolute;left:1519.85px;top:662px;font-size:16px;line-height:16px;color:#1a2030;font-weight:400;white-space:nowrap;letter-spacing:0.315px;">Automated wel...</div>
<div style="position:absolute;left:668.00px;top:687.00px;width:989.00px;height:1.00px;background:#e8ebf4"></div>
<div style="position:absolute;left:683.00px;top:697.00px;width:18.00px;height:18.00px;box-sizing:border-box;border:1.5px solid #3b4f6b;border-radius:4px;background:#fff"></div>
<div style="position:absolute;left:724.00px;top:692.40px;width:28.00px;height:28.00px;background:#cfe8fc;border-radius:50%"></div>
<svg style="position:absolute;left:724px;top:692.40px" width="28" height="28" viewBox="0 0 28 28"><rect x="11.4" y="7.6" width="6.2" height="6.1" rx="1" fill="none" stroke="#1b74d6" stroke-width="1.25"/><rect x="13.8" y="10" width="1.5" height="1.5" rx="0.5" fill="#1b74d6"/><rect x="7.7" y="15.6" width="13.2" height="4.9" rx="1.3" fill="none" stroke="#1b74d6" stroke-width="1.25"/></svg>
<div id="ta916bae6" style="position:absolute;left:762.29px;top:699px;font-size:16px;line-height:16px;color:#1a2030;font-weight:400;white-space:nowrap;letter-spacing:0.383px;">Waterjet Cutter</div>
<div id="tbdb39da0" style="position:absolute;left:1051.14px;top:699px;font-size:16px;line-height:16px;color:#1a2030;font-weight:400;white-space:nowrap;letter-spacing:0.425px;">Default Schedule</div>
<div id="ta6e553c4" style="position:absolute;left:1222.70px;top:699px;font-size:16px;line-height:16px;color:#1a2030;font-weight:400;white-space:nowrap;letter-spacing:0.375px;">Metal Cutting and Machining Syste...</div>
<div id="tf966ddf8" style="position:absolute;left:1518.81px;top:699px;font-size:16px;line-height:16px;color:#1a2030;font-weight:400;white-space:nowrap;letter-spacing:0.351px;">Large compone...</div>
<div style="position:absolute;left:668.00px;top:724.00px;width:989.00px;height:1.00px;background:#e8ebf4"></div>
<div style="position:absolute;left:683.00px;top:734.00px;width:18.00px;height:18.00px;box-sizing:border-box;border:1.5px solid #3b4f6b;border-radius:4px;background:#fff"></div>
<div style="position:absolute;left:724.00px;top:729.46px;width:28.00px;height:28.00px;background:#cfe8fc;border-radius:50%"></div>
<svg style="position:absolute;left:724px;top:729.46px" width="28" height="28" viewBox="0 0 28 28"><rect x="11.4" y="7.6" width="6.2" height="6.1" rx="1" fill="none" stroke="#1b74d6" stroke-width="1.25"/><rect x="13.8" y="10" width="1.5" height="1.5" rx="0.5" fill="#1b74d6"/><rect x="7.7" y="15.6" width="13.2" height="4.9" rx="1.3" fill="none" stroke="#1b74d6" stroke-width="1.25"/></svg>
<div id="t0c563aff" style="position:absolute;left:761.17px;top:736px;font-size:16px;line-height:16px;color:#1a2030;font-weight:400;white-space:nowrap;letter-spacing:0.400px;">Heat Treatment Ov...</div>
<div id="tae0cff5d" style="position:absolute;left:1051.14px;top:736px;font-size:16px;line-height:16px;color:#1a2030;font-weight:400;white-space:nowrap;letter-spacing:0.425px;">Default Schedule</div>
<div id="tbbf50440" style="position:absolute;left:1223.56px;top:736px;font-size:16px;line-height:16px;color:#1a2030;font-weight:400;white-space:nowrap;letter-spacing:0.284px;">Thermal Processing Equipment</div>
<div id="t067a7060" style="position:absolute;left:1518.81px;top:736px;font-size:16px;line-height:16px;color:#1a2030;font-weight:400;white-space:nowrap;letter-spacing:0.531px;">Non-heat affec...</div>
<div style="position:absolute;left:668.00px;top:761.00px;width:989.00px;height:1.00px;background:#e8ebf4"></div>
<div style="position:absolute;left:683.00px;top:771.00px;width:18.00px;height:18.00px;box-sizing:border-box;border:1.5px solid #3b4f6b;border-radius:4px;background:#fff"></div>
<div style="position:absolute;left:724.00px;top:766.52px;width:28.00px;height:28.00px;background:#cfe8fc;border-radius:50%"></div>
<svg style="position:absolute;left:724px;top:766.52px" width="28" height="28" viewBox="0 0 28 28"><rect x="11.4" y="7.6" width="6.2" height="6.1" rx="1" fill="none" stroke="#1b74d6" stroke-width="1.25"/><rect x="13.8" y="10" width="1.5" height="1.5" rx="0.5" fill="#1b74d6"/><rect x="7.7" y="15.6" width="13.2" height="4.9" rx="1.3" fill="none" stroke="#1b74d6" stroke-width="1.25"/></svg>
<div id="t2f0eee11" style="position:absolute;left:762.30px;top:774px;font-size:16px;line-height:16px;color:#1a2030;font-weight:400;white-space:nowrap;letter-spacing:0.300px;">Spot Welder</div>
<div id="tffde1628" style="position:absolute;left:1052.20px;top:774px;font-size:16px;line-height:16px;color:#1a2030;font-weight:400;white-space:nowrap;letter-spacing:0.317px;">Default Schedule</div>
<div id="t0b192fbf" style="position:absolute;left:1223.80px;top:774px;font-size:16px;line-height:16px;color:#1a2030;font-weight:400;white-space:nowrap;letter-spacing:0.300px;">Welding Equipment</div>
<div id="t7287ca8d" style="position:absolute;left:1519.90px;top:774px;font-size:16px;line-height:16px;color:#1a2030;font-weight:400;white-space:nowrap;letter-spacing:0.300px;">Automated wel...</div>
<div style="position:absolute;left:668.00px;top:798.00px;width:989.00px;height:1.00px;background:#e8ebf4"></div>
<div style="position:absolute;left:714.00px;top:304.00px;width:1.00px;height:468.00px;background:#e8ebf4"></div>
<div style="position:absolute;left:923.00px;top:304.00px;width:1.00px;height:468.00px;background:#e8ebf4"></div>
<div style="position:absolute;left:1041.00px;top:304.00px;width:1.00px;height:468.00px;background:#e8ebf4"></div>
<div style="position:absolute;left:1213.00px;top:304.00px;width:1.00px;height:468.00px;background:#e8ebf4"></div>
<div style="position:absolute;left:1509.00px;top:304.00px;width:1.00px;height:468.00px;background:#e8ebf4"></div>
<div style="position:absolute;left:1657.00px;top:304.00px;width:1.00px;height:468.00px;background:#e8ebf4"></div>
<div style="position:absolute;left:668.00px;top:267.00px;width:1021.00px;height:37.00px;background:#fff"></div>
<div style="position:absolute;left:668.00px;top:267.00px;width:1021.00px;height:1.00px;background:#eceff6"></div>
<div style="position:absolute;left:668.00px;top:304.00px;width:1021.00px;height:1.00px;background:#e8ebf4"></div>
<div style="position:absolute;left:714.00px;top:267.00px;width:1.00px;height:37.00px;background:#e8ebf4"></div>
<div style="position:absolute;left:923.00px;top:267.00px;width:1.00px;height:37.00px;background:#e8ebf4"></div>
<div style="position:absolute;left:1041.00px;top:267.00px;width:1.00px;height:37.00px;background:#e8ebf4"></div>
<div style="position:absolute;left:1213.00px;top:267.00px;width:1.00px;height:37.00px;background:#e8ebf4"></div>
<div style="position:absolute;left:1509.00px;top:267.00px;width:1.00px;height:37.00px;background:#e8ebf4"></div>
<div style="position:absolute;left:1657.00px;top:267.00px;width:1.00px;height:37.00px;background:#e8ebf4"></div>
<div id="t7bbcc271" style="position:absolute;left:724.04px;top:280px;font-size:14px;line-height:14px;color:#1a1f2e;font-weight:400;white-space:nowrap;letter-spacing:0.246px;">Name</div>
<div id="ta5431f61" style="position:absolute;left:934.00px;top:280px;font-size:14px;line-height:14px;color:#1a1f2e;font-weight:400;white-space:nowrap;letter-spacing:0.142px;">Job Role</div>
<div id="taa75472f" style="position:absolute;left:1052.31px;top:280px;font-size:14px;line-height:14px;color:#1a1f2e;font-weight:400;white-space:nowrap;letter-spacing:0.282px;">Work Schedule</div>
<svg style="position:absolute;left:1153px;top:277px;" width="14" height="19" viewBox="0 0 14 19"><line x1="7" y1="2.5" x2="7" y2="16.8" stroke="#4a4f5a" stroke-width="1.4"/><polyline points="3,6.5 7,2.3 11,6.5" fill="none" stroke="#4a4f5a" stroke-width="1.4" stroke-linejoin="round"/></svg>
<div id="t30b043d2" style="position:absolute;left:1222.46px;top:280px;font-size:14px;line-height:14px;color:#1a1f2e;font-weight:400;white-space:nowrap;letter-spacing:0.463px;">Machine type</div>
<div id="t99b5ebdf" style="position:absolute;left:1519.04px;top:280px;font-size:14px;line-height:14px;color:#1a1f2e;font-weight:400;white-space:nowrap;letter-spacing:0.397px;">Primary application</div>
<svg style="position:absolute;left:1668px;top:278px;" width="16" height="16" viewBox="0 0 16 16"><line x1="8" y1="2" x2="8" y2="14.8" stroke="#2f3441" stroke-width="1.1"/><line x1="1.8" y1="8.4" x2="14.2" y2="8.4" stroke="#2f3441" stroke-width="1.1"/></svg>
<div style="position:absolute;left:668.00px;top:772.00px;width:1021.00px;height:37.00px;background:#fff"></div>
<div style="position:absolute;left:668.00px;top:772.00px;width:1022.00px;height:1.00px;background:#e8ebf4"></div>
<div style="position:absolute;left:668.00px;top:809.00px;width:1021.00px;height:1.00px;background:#e8ebf4"></div>
<div style="position:absolute;left:714.00px;top:772.00px;width:1.00px;height:37.00px;background:#e8ebf4"></div>
<div style="position:absolute;left:923.00px;top:772.00px;width:1.00px;height:37.00px;background:#e8ebf4"></div>
<div style="position:absolute;left:1041.00px;top:772.00px;width:1.00px;height:37.00px;background:#e8ebf4"></div>
<div style="position:absolute;left:1213.00px;top:772.00px;width:1.00px;height:37.00px;background:#e8ebf4"></div>
<div style="position:absolute;left:1509.00px;top:772.00px;width:1.00px;height:37.00px;background:#e8ebf4"></div>
<div style="position:absolute;left:1657.00px;top:772.00px;width:1.00px;height:37.00px;background:#e8ebf4"></div>
<div id="t65adf367" style="position:absolute;left:724.98px;top:784px;font-size:15.5px;line-height:15.5px;color:#1f2533;font-weight:400;white-space:nowrap;letter-spacing:0.633px;">Total: 14 assets</div>
<div style="position:absolute;left:668.00px;top:267.00px;width:1.00px;height:543.00px;background:#e8ebf4"></div>
<div style="position:absolute;left:1689.00px;top:267.00px;width:1.00px;height:543.00px;background:#e9ebf1"></div>
<div style="position:absolute;left:1690.00px;top:268.00px;width:11.00px;height:542.00px;background:#ededf0"></div>
<div style="position:absolute;left:1693.30px;top:294.00px;width:5.70px;height:488.00px;background:#c5c8d0;border-radius:3px"></div>
<div style="position:absolute;left:668.00px;top:810.00px;width:1033.00px;height:9.00px;background:#ededf0"></div>
<div style="position:absolute;left:672.00px;top:813.00px;width:1008.00px;height:6.00px;background:#c5c8d0;border-radius:3px"></div>
<div style="position:absolute;left:669.00px;top:773.00px;width:1020.00px;height:36.00px;background:linear-gradient(rgba(0,0,0,0),rgba(0,0,0,0.035))"></div>
</div>
</body></html>
